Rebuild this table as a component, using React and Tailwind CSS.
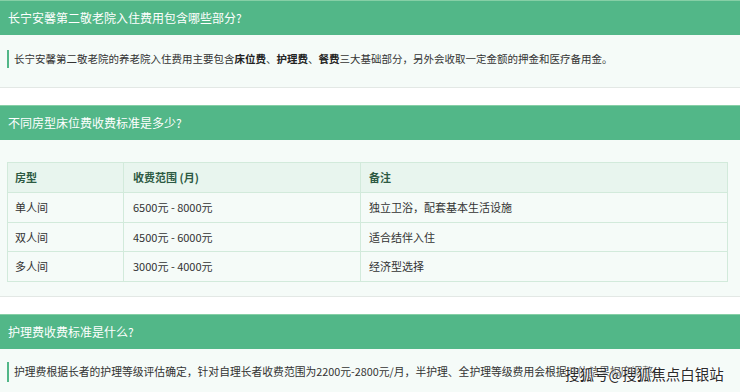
export default function App() {
  const font = { fontFamily: '"Microsoft YaHei","Noto Sans CJK SC","Noto Sans",sans-serif' };
  const rows = [
    ["单人间", "6500元 - 8000元", "独立卫浴，配套基本生活设施"],
    ["双人间", "4500元 - 6000元", "适合结伴入住"],
    ["多人间", "3000元 - 4000元", "经济型选择"],
  ];
  return (
    <div className="w-[740px] h-[392px] overflow-hidden bg-white relative" style={font}>
      {/* Section 1 */}
      <div className="mb-[17px] border-b border-[#e3e8e5]">
        <div className="h-[35px] bg-[#52b788] border-t border-[#86cfa6] flex items-center pl-[8px] text-white text-[12px]">
          长宁安馨第二敬老院入住费用包含哪些部分?
        </div>
        <div className="bg-[#f5fbf8] pt-[15px] pb-[19px] pl-[7px]">
          <div className="border-l-2 border-[#52b788] pl-[5px] h-[18px] flex items-center text-[10.5px] text-[#333]">
            长宁安馨第二敬老院的养老院入住费用主要包含<b className="text-[#222]">床位费</b>、<b className="text-[#222]">护理费</b>、<b className="text-[#222]">餐费</b>三大基础部分，另外会收取一定金额的押金和医疗备用金。
          </div>
        </div>
      </div>

      {/* Section 2 */}
      <div className="mb-[17px] border-b border-[#e3e8e5]">
        <div className="h-[35px] bg-[#52b788] border-t border-[#86cfa6] flex items-center pl-[8px] text-white text-[12px]">
          不同房型床位费收费标准是多少?
        </div>
        <div className="bg-[#f5fbf8] pt-[22px] pb-[14px] pl-[7px]">
          <table className="w-[721px] border-collapse text-[11px] text-[#333]">
            <thead>
              <tr className="bg-[#e8f5ee] h-[30px]">
                <th className="border border-[#d2eadb] text-left font-bold text-[#2d5a43] pl-[7px] w-[116px]">房型</th>
                <th className="border border-[#d2eadb] text-left font-bold text-[#2d5a43] pl-[9px] w-[237px]">收费范围 (月)</th>
                <th className="border border-[#d2eadb] text-left font-bold text-[#2d5a43] pl-[8px]">备注</th>
              </tr>
            </thead>
            <tbody>
              {rows.map((r) => (
                <tr key={r[0]} className="h-[29.5px]">
                  <td className="border border-[#d2eadb] pl-[7px]">{r[0]}</td>
                  <td className="border border-[#d2eadb] pl-[9px]">{r[1]}</td>
                  <td className="border border-[#d2eadb] pl-[8px]">{r[2]}</td>
                </tr>
              ))}
            </tbody>
          </table>
        </div>
      </div>

      {/* Section 3 */}
      <div className="border-b border-[#e3e8e5]">
        <div className="h-[35px] bg-[#52b788] border-t border-[#86cfa6] flex items-center pl-[8px] text-white text-[12px]">
          护理费收费标准是什么?
        </div>
        <div className="bg-[#f5fbf8] pt-[13px] pb-[10px] pl-[7px]">
          <div className="border-l-2 border-[#52b788] pl-[5px] h-[20px] flex items-center text-[10.8px] text-[#333] whitespace-nowrap">
            护理费根据长者的护理等级评估确定，针对自理长者收费范围为2200元-2800元/月，半护理、全护理等级费用会根据评估结果相应调整。
          </div>
        </div>
      </div>

      <div
        className="absolute left-[565px] top-[364px] text-[14.5px] leading-[20px] text-[#2a2a2a] whitespace-nowrap"
        style={{ textShadow: "0 0 2px #fff, 0 0 2px #fff, 0 0 3px #fff" }}
      >
        搜狐号@搜狐焦点白银站
      </div>
    </div>
  );
}
